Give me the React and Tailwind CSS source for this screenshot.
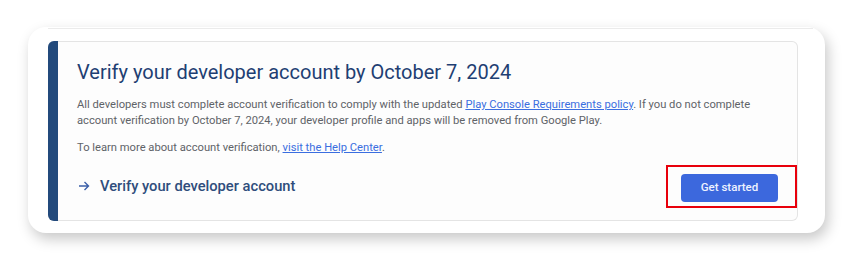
import React from 'react'

export default function App() {
  return (
    <div className="w-[854px] h-[266px] bg-white pl-[28px] pt-[27px]" style={{ fontFamily: 'Roboto, "Open Sans", sans-serif' }}>
      <div className="w-[797px] h-[206px] bg-white rounded-[18px] shadow-[3px_6px_14px_rgba(0,0,0,0.22)] pt-px">
        <div className="h-px bg-[#ebebeb] ml-[20px] mr-[12px]" />
        <div className="ml-[20px] mt-[12px] w-[750px] h-[180px] flex border border-[#e4e4e4] border-l-0 rounded-[6px] bg-[#fdfdfd]">
          <div className="w-[10px] -my-px bg-[#234a7c] rounded-l-[6px]" />
          <div className="flex-1 pl-[19px] pt-[16px]">
            <h1 className="text-[20px] leading-[28px] text-[#1f3f73]">
              Verify your developer account by October 7, 2024
            </h1>
            <p className="mt-[11px] text-[11.2px] leading-[16px] text-[#5f6368] pr-[20px]">
              All developers must complete account verification to comply with the updated{' '}
              <a className="text-[#3b6ee0] underline">Play Console Requirements policy</a>. If you do not complete
              account verification by October 7, 2024, your developer profile and apps will be removed from Google Play.
            </p>
            <p className="mt-[11px] text-[11.2px] leading-[16px] text-[#5f6368]">
              To learn more about account verification,{' '}
              <a className="text-[#3b6ee0] underline">visit the Help Center</a>.
            </p>
            <div className="mt-[9px] flex items-center justify-between">
              <div className="flex items-center gap-[10px] text-[#2f4d7c]">
                <svg width="12" height="12" viewBox="0 0 12 12" fill="none" stroke="#3b5fa8" strokeWidth="1.4" className="ml-px">
                  <path d="M1 6h9.5M6.5 2l4 4-4 4" />
                </svg>
                <span className="text-[14.7px] font-medium">Verify your developer account</span>
              </div>
              <div className="border-2 border-[#e8000b] pl-[13px] pr-[17px] pt-[7px] pb-[4px]">
                <button className="w-[97px] h-[28px] rounded-[4px] bg-[#3c68dd] text-[#eef2ff] text-[11.5px] font-medium">
                  Get started
                </button>
              </div>
            </div>
          </div>
        </div>
      </div>
    </div>
  )
}
